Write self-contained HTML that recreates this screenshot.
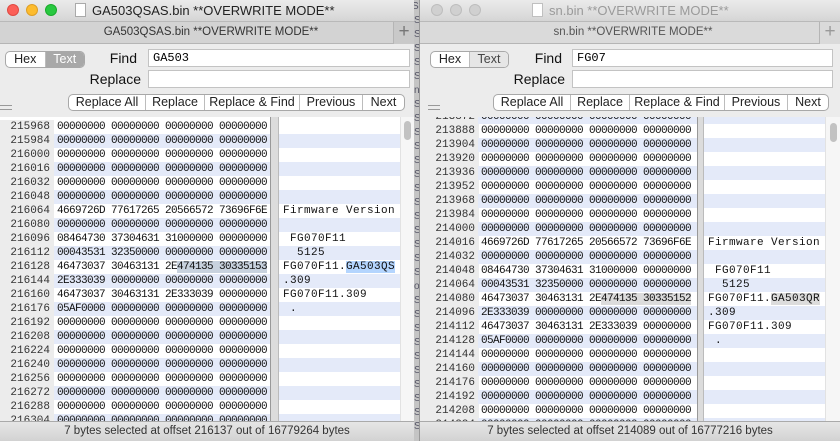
<!DOCTYPE html>
<html><head><meta charset="utf-8"><style>
*{margin:0;padding:0;box-sizing:border-box}
body{width:840px;height:441px;overflow:hidden;background:#b8b8b8;font-family:"Liberation Sans",sans-serif;position:relative}
.win{position:absolute;top:0;height:441px;background:#ececec;overflow:hidden}
.tb{position:absolute;left:0;right:0;top:0;height:22px;background:linear-gradient(#ebebeb,#d5d5d5);border-bottom:1px solid #b9b9b9}
.tt{position:absolute;top:3px;font-size:13px;color:#333;white-space:nowrap}
.dot{position:absolute;top:4px;width:12px;height:12px;border-radius:50%}
.doc{position:absolute;top:3px;width:11px;height:14px;background:#fff;border:1px solid #aaa}
.tab{position:absolute;left:0;right:0;top:22px;height:22px;background:#d3d3d3;border-bottom:1px solid #b5b5b5;font-size:11.5px;color:#333;text-align:center;line-height:21px}
.plus{position:absolute;right:0;top:22px;width:21px;height:22px;border-left:1px solid #b5b5b5;background:#c9c9c9;color:#777;font-size:19px;line-height:20px;text-align:center}
.seg{position:absolute;height:17px;border:1px solid #a8a8a8;border-radius:5px;background:#fff;display:flex;font-size:12.5px;overflow:hidden}
.seg span{flex:1;text-align:center;line-height:15px;color:#222;border-left:1px solid #bcbcbc}
.seg span:first-child{border-left:none}
.lab{position:absolute;font-size:14px;color:#111;text-align:right}
.inp{position:absolute;height:18px;background:#fff;border:1px solid #c3c3c3;font-family:"Liberation Mono",monospace;font-size:12px;padding-left:4px;line-height:16px}
.rows{position:absolute;left:0;right:0;bottom:20px;overflow:hidden;background:#fff}
.r{position:relative;height:14px;font-family:"Liberation Mono",monospace;font-size:11px;line-height:14px;white-space:pre}
.r i{position:absolute;left:0;text-align:right;font-style:normal;color:#333;background:#ececec;padding-right:4px;height:14px;width:calc(var(--nw) + 5px)}
.r s{position:absolute;left:var(--hx);width:var(--hw);text-decoration:none;letter-spacing:-0.6px;padding-left:3px;height:14px;color:#111}
.r u{position:absolute;left:var(--tx);width:var(--tw);text-decoration:none;letter-spacing:0.4px;padding-left:4px;height:14px;color:#111}
.r.b s,.r.b u{background:#e4eaf9}
.div{position:absolute;top:0;bottom:0;background:#dcdcdc;border-left:1px solid #999;border-right:1px solid #bbb}
.sc{position:absolute;top:0;bottom:0;background:#f6f6f6;border-left:1px solid #e2e2e2}
.knob{position:absolute;width:7px;height:19px;border-radius:4px;background:#c2c2c2;top:4px}
.st{position:absolute;left:0;right:0;bottom:0;height:20px;background:linear-gradient(#e6e6e6,#d2d2d2);border-top:1px solid #aaa;font-size:11.5px;color:#333;text-align:center;line-height:19px}
.hl1{background:#c8d2de}
.hl2{background:#b4d5fe}
.hl3{background:#dcdcdc}
.ham{position:absolute;left:0;width:12px;height:5px;border-top:1px solid #999;border-bottom:1px solid #999}
</style></head><body>

<div style="position:absolute;left:414px;top:0;width:5px;height:441px;background:#c4c4c4;font-size:10px;color:#556;line-height:14px;overflow:hidden;text-indent:-2px">S<br>S<br>S<br>S<br>S<br>S<br>n<br>S<br>S<br>S<br>S<br>S<br>S<br>S<br>S<br>S<br>S<br>S<br>S<br>S<br>o<br>S<br>S<br>S<br>S<br>S<br>S<br>S<br>S<br>S<br>S</div>

<!-- LEFT WINDOW -->
<div class="win" style="left:0;width:414px;--nw:49px;--hx:54px;--hw:216px;--tx:279px;--tw:121px">
<div class="tb">
<div class="dot" style="left:7px;background:#fc5f57;border:1px solid #df4a43"></div>
<div class="dot" style="left:26px;background:#fdbc2e;border:1px solid #de9f26"></div>
<div class="dot" style="left:45px;background:#28c840;border:1px solid #1aab2c"></div>
<div class="doc" style="left:75px"></div>
<div class="tt" style="left:92px;color:#222">GA503QSAS.bin **OVERWRITE MODE**</div>
</div>
<div class="tab" style="padding-left:8px">GA503QSAS.bin **OVERWRITE MODE**</div>
<div class="plus">+</div>
<div class="seg" style="left:5px;top:51px;width:80px"><span>Hex</span><span style="background:#a8a8a8;color:#fff">Text</span></div>
<div class="lab" style="left:90px;top:50px;width:47px">Find</div>
<div class="inp" style="left:148px;top:49px;width:262px">GA503</div>
<div class="lab" style="left:80px;top:71px;width:61px">Replace</div>
<div class="inp" style="left:148px;top:70px;width:262px"></div>
<div class="seg" style="left:68px;top:94px;width:337px"><span style="flex:0 0 76px">Replace All</span><span style="flex:0 0 59px">Replace</span><span style="flex:0 0 95px">Replace &amp; Find</span><span style="flex:0 0 63px">Previous</span><span>Next</span></div>
<div class="ham" style="top:105px"></div>
<div class="rows" style="top:117px">
<div style="height:3px"></div>
<div class="r"><i>215968</i><s>00000000 00000000 00000000 00000000</s><u></u></div>
<div class="r b"><i>215984</i><s>00000000 00000000 00000000 00000000</s><u></u></div>
<div class="r"><i>216000</i><s>00000000 00000000 00000000 00000000</s><u></u></div>
<div class="r b"><i>216016</i><s>00000000 00000000 00000000 00000000</s><u></u></div>
<div class="r"><i>216032</i><s>00000000 00000000 00000000 00000000</s><u></u></div>
<div class="r b"><i>216048</i><s>00000000 00000000 00000000 00000000</s><u></u></div>
<div class="r"><i>216064</i><s>4669726D 77617265 20566572 73696F6E</s><u>Firmware Version</u></div>
<div class="r b"><i>216080</i><s>00000000 00000000 00000000 00000000</s><u></u></div>
<div class="r"><i>216096</i><s>08464730 37304631 31000000 00000000</s><u> FG070F11</u></div>
<div class="r b"><i>216112</i><s>00043531 32350000 00000000 00000000</s><u>  5125</u></div>
<div class="r"><i>216128</i><s>46473037 30463131 2E<span class="hl1">474135 30335153</span></s><u>FG070F11.<span class="hl2">GA503QS</span></u></div>
<div class="r b"><i>216144</i><s>2E333039 00000000 00000000 00000000</s><u>.309</u></div>
<div class="r"><i>216160</i><s>46473037 30463131 2E333039 00000000</s><u>FG070F11.309</u></div>
<div class="r b"><i>216176</i><s>05AF0000 00000000 00000000 00000000</s><u> .</u></div>
<div class="r"><i>216192</i><s>00000000 00000000 00000000 00000000</s><u></u></div>
<div class="r b"><i>216208</i><s>00000000 00000000 00000000 00000000</s><u></u></div>
<div class="r"><i>216224</i><s>00000000 00000000 00000000 00000000</s><u></u></div>
<div class="r b"><i>216240</i><s>00000000 00000000 00000000 00000000</s><u></u></div>
<div class="r"><i>216256</i><s>00000000 00000000 00000000 00000000</s><u></u></div>
<div class="r b"><i>216272</i><s>00000000 00000000 00000000 00000000</s><u></u></div>
<div class="r"><i>216288</i><s>00000000 00000000 00000000 00000000</s><u></u></div>
<div class="r b"><i>216304</i><s>00000000 00000000 00000000 00000000</s><u></u></div>
<div class="div" style="left:270px;width:9px"></div>
<div class="sc" style="left:400px;width:14px"><div class="knob" style="left:3px"></div></div>
</div>
<div class="st">7 bytes selected at offset 216137 out of 16779264 bytes</div>
</div>

<!-- RIGHT WINDOW -->
<div class="win" style="left:419px;width:421px;border-left:1px solid #999;--nw:54px;--hx:58px;--hw:219px;--tx:284px;--tw:121px">
<div class="tb">
<div class="dot" style="left:11px;background:#d0d0d0;border:1px solid #bdbdbd"></div>
<div class="dot" style="left:30px;background:#d0d0d0;border:1px solid #bdbdbd"></div>
<div class="dot" style="left:49px;background:#d0d0d0;border:1px solid #bdbdbd"></div>
<div class="doc" style="left:112px;border-color:#c0c0c0"></div>
<div class="tt" style="left:129px;color:#9a9a9a">sn.bin **OVERWRITE MODE**</div>
</div>
<div class="tab" style="color:#555;background:#dadada;padding-left:6px">sn.bin **OVERWRITE MODE**</div>
<div class="plus" style="background:#dadada;color:#999">+</div>
<div class="seg" style="left:10px;top:51px;width:79px"><span>Hex</span><span style="background:#e6e6e6;color:#444">Text</span></div>
<div class="lab" style="left:95px;top:50px;width:47px">Find</div>
<div class="inp" style="left:152px;top:49px;width:261px">FG07</div>
<div class="lab" style="left:85px;top:71px;width:60px">Replace</div>
<div class="inp" style="left:152px;top:70px;width:261px"></div>
<div class="seg" style="left:73px;top:94px;width:336px"><span style="flex:0 0 76px">Replace All</span><span style="flex:0 0 59px">Replace</span><span style="flex:0 0 95px">Replace &amp; Find</span><span style="flex:0 0 63px">Previous</span><span>Next</span></div>
<div class="ham" style="top:105px;left:8px"></div>
<div class="rows" style="top:117px">
<div style="margin-top:-7px"></div>
<div class="r b"><i>213872</i><s>00000000 00000000 00000000 00000000</s><u></u></div>
<div class="r"><i>213888</i><s>00000000 00000000 00000000 00000000</s><u></u></div>
<div class="r b"><i>213904</i><s>00000000 00000000 00000000 00000000</s><u></u></div>
<div class="r"><i>213920</i><s>00000000 00000000 00000000 00000000</s><u></u></div>
<div class="r b"><i>213936</i><s>00000000 00000000 00000000 00000000</s><u></u></div>
<div class="r"><i>213952</i><s>00000000 00000000 00000000 00000000</s><u></u></div>
<div class="r b"><i>213968</i><s>00000000 00000000 00000000 00000000</s><u></u></div>
<div class="r"><i>213984</i><s>00000000 00000000 00000000 00000000</s><u></u></div>
<div class="r b"><i>214000</i><s>00000000 00000000 00000000 00000000</s><u></u></div>
<div class="r"><i>214016</i><s>4669726D 77617265 20566572 73696F6E</s><u>Firmware Version</u></div>
<div class="r b"><i>214032</i><s>00000000 00000000 00000000 00000000</s><u></u></div>
<div class="r"><i>214048</i><s>08464730 37304631 31000000 00000000</s><u> FG070F11</u></div>
<div class="r b"><i>214064</i><s>00043531 32350000 00000000 00000000</s><u>  5125</u></div>
<div class="r"><i>214080</i><s>46473037 30463131 2E<span class="hl3">474135 30335152</span></s><u>FG070F11.<span class="hl3">GA503QR</span></u></div>
<div class="r b"><i>214096</i><s>2E333039 00000000 00000000 00000000</s><u>.309</u></div>
<div class="r"><i>214112</i><s>46473037 30463131 2E333039 00000000</s><u>FG070F11.309</u></div>
<div class="r b"><i>214128</i><s>05AF0000 00000000 00000000 00000000</s><u> .</u></div>
<div class="r"><i>214144</i><s>00000000 00000000 00000000 00000000</s><u></u></div>
<div class="r b"><i>214160</i><s>00000000 00000000 00000000 00000000</s><u></u></div>
<div class="r"><i>214176</i><s>00000000 00000000 00000000 00000000</s><u></u></div>
<div class="r b"><i>214192</i><s>00000000 00000000 00000000 00000000</s><u></u></div>
<div class="r"><i>214208</i><s>00000000 00000000 00000000 00000000</s><u></u></div>
<div class="r b"><i>214224</i><s>00000000 00000000 00000000 00000000</s><u></u></div>
<div class="div" style="left:277px;width:7px"></div>
<div class="sc" style="left:405px;width:16px"><div class="knob" style="left:4px;top:6px"></div></div>
</div>
<div class="st">7 bytes selected at offset 214089 out of 16777216 bytes</div>
</div>
</body></html>
